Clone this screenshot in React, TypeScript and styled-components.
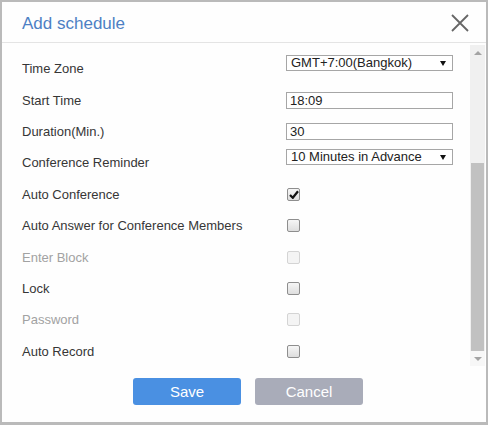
import React from 'react';
import styled, { createGlobalStyle, css } from 'styled-components';

const GlobalStyle = createGlobalStyle`
  html, body {
    margin: 0;
    padding: 0;
    background: #ffffff;
  }
  body {
    font-family: 'Liberation Sans', Arial, sans-serif;
  }
`;

const StyledDialog = styled.div`
  box-sizing: border-box;
  width: 488px;
  height: 425px;
  border: 2px solid #bababa;
  border-bottom-width: 3px;
  background: #fefefe;
  display: flex;
  flex-direction: column;
`;

const StyledHeader = styled.div`
  height: 40px;
  border-bottom: 1px solid #e4e4e4;
  display: flex;
  align-items: center;
  justify-content: space-between;
  padding: 0 16px 0 20px;
`;

const StyledTitle = styled.h2`
  margin: 3px 0 0;
  font-size: 17px;
  font-weight: normal;
  color: #4d80c4;
`;

const StyledClose = styled.button`
  border: 0;
  background: none;
  padding: 0;
  width: 20px;
  height: 20px;
  margin-top: 2px;
  display: flex;
  cursor: pointer;
`;

const StyledBody = styled.div`
  flex: 1;
  display: flex;
  min-height: 0;
`;

const StyledForm = styled.div`
  flex: 1;
  padding: 10px 0 0 20px;
  display: grid;
  grid-template-columns: 264px 167px;
  grid-auto-rows: 31.4px;
  align-content: start;
  align-items: center;
`;

const StyledLabel = styled.label<{ $disabled?: boolean }>`
  font-size: 13px;
  color: ${({ $disabled }) => ($disabled ? '#a2a2a2' : '#363636')};
`;

const field = css`
  box-sizing: border-box;
  width: 167px;
  border: 1px solid #a6a6a6;
  background: #fff;
  font-family: 'Liberation Sans', Arial, sans-serif;
  font-size: 13px;
  color: #222;
`;

const StyledInput = styled.input`
  ${field}
  height: 17px;
  padding: 0 3px;
  outline: none;
`;

const StyledSelect = styled.div`
  ${field}
  height: 16px;
  padding: 0 4px;
  display: flex;
  align-items: center;
  justify-content: space-between;
  align-self: start;
  margin-top: 2px;
  line-height: 14px;
`;

const StyledCaret = styled.span`
  width: 0;
  height: 0;
  border-left: 3.5px solid transparent;
  border-right: 3.5px solid transparent;
  border-top: 5px solid #111;
  margin-right: 2px;
`;

const StyledCheck = styled.span<{ $disabled?: boolean }>`
  box-sizing: border-box;
  width: 13px;
  height: 13px;
  margin-left: 1px;
  border-radius: 2px;
  border: 1px solid ${({ $disabled }) => ($disabled ? '#d4d4d4' : '#8e8e8e')};
  background: ${({ $disabled }) =>
    $disabled ? '#f4f4f4' : 'linear-gradient(#f6f6f6, #dedede)'};
  display: flex;
  align-items: center;
  justify-content: center;
`;

const StyledScrollbar = styled.div`
  width: 15px;
  margin: 2px 1px 0 0;
  background: #f0f0f0;
  display: flex;
  flex-direction: column;
`;

const StyledArrow = styled.div<{ $down?: boolean }>`
  height: 15px;
  display: flex;
  align-items: center;
  justify-content: center;
  background: ${({ $down }) => ($down ? '#f7f7f7' : 'transparent')};

  &:after {
    content: '';
    border-left: 4px solid transparent;
    border-right: 4px solid transparent;
    ${({ $down }) =>
      $down ? 'border-top: 4px solid #a3a3a3;' : 'border-bottom: 4px solid #a3a3a3;'}
  }
`;

const StyledTrack = styled.div`
  flex: 1;
  display: flex;
  flex-direction: column;
  justify-content: flex-end;
`;

const StyledThumb = styled.div`
  height: 188px;
  margin: 0 1px;
  background: #c1c1c1;
`;

const StyledFooter = styled.div`
  height: 56px;
  display: flex;
  justify-content: center;
  gap: 14px;
  padding: 12px 0 0 8px;
  box-sizing: border-box;
`;

const StyledButton = styled.button<{ $primary?: boolean }>`
  width: 108px;
  height: 27px;
  border: 0;
  border-radius: 3px;
  font-family: 'Liberation Sans', Arial, sans-serif;
  font-size: 15px;
  color: #fff;
  background: ${({ $primary }) => ($primary ? '#4a90e2' : '#a9acb9')};
  cursor: pointer;
`;

type CheckRow = { label: string; checked?: boolean; disabled?: boolean };

const checkRows: CheckRow[] = [
  { label: 'Auto Conference', checked: true },
  { label: 'Auto Answer for Conference Members' },
  { label: 'Enter Block', disabled: true },
  { label: 'Lock' },
  { label: 'Password', disabled: true },
  { label: 'Auto Record' },
];

const Checkbox: React.FC<CheckRow> = ({ checked, disabled }) => (
  <StyledCheck $disabled={disabled}>
    {checked && (
      <svg width="10" height="9" viewBox="0 0 10 9">
        <path d="M1 5 L3.8 7.8 L9 1.2" fill="none" stroke="#111" strokeWidth="2.2" />
      </svg>
    )}
  </StyledCheck>
);

export default function App(): JSX.Element {
  return (
    <>
      <GlobalStyle />
      <StyledDialog>
        <StyledHeader>
          <StyledTitle>Add schedule</StyledTitle>
          <StyledClose aria-label="Close">
            <svg width="20" height="20" viewBox="0 0 20 20">
              <path d="M2 2 L18 18 M18 2 L2 18" stroke="#666" strokeWidth="1.8" />
            </svg>
          </StyledClose>
        </StyledHeader>
        <StyledBody>
          <StyledForm>
            <StyledLabel>Time Zone</StyledLabel>
            <StyledSelect>
              GMT+7:00(Bangkok)
              <StyledCaret />
            </StyledSelect>
            <StyledLabel>Start Time</StyledLabel>
            <StyledInput defaultValue="18:09" />
            <StyledLabel>Duration(Min.)</StyledLabel>
            <StyledInput defaultValue="30" />
            <StyledLabel>Conference Reminder</StyledLabel>
            <StyledSelect>
              10 Minutes in Advance
              <StyledCaret />
            </StyledSelect>
            {checkRows.map((row) => (
              <React.Fragment key={row.label}>
                <StyledLabel $disabled={row.disabled}>{row.label}</StyledLabel>
                <Checkbox {...row} />
              </React.Fragment>
            ))}
          </StyledForm>
          <StyledScrollbar>
            <StyledArrow />
            <StyledTrack>
              <StyledThumb />
            </StyledTrack>
            <StyledArrow $down />
          </StyledScrollbar>
        </StyledBody>
        <StyledFooter>
          <StyledButton $primary>Save</StyledButton>
          <StyledButton>Cancel</StyledButton>
        </StyledFooter>
      </StyledDialog>
    </>
  );
}
